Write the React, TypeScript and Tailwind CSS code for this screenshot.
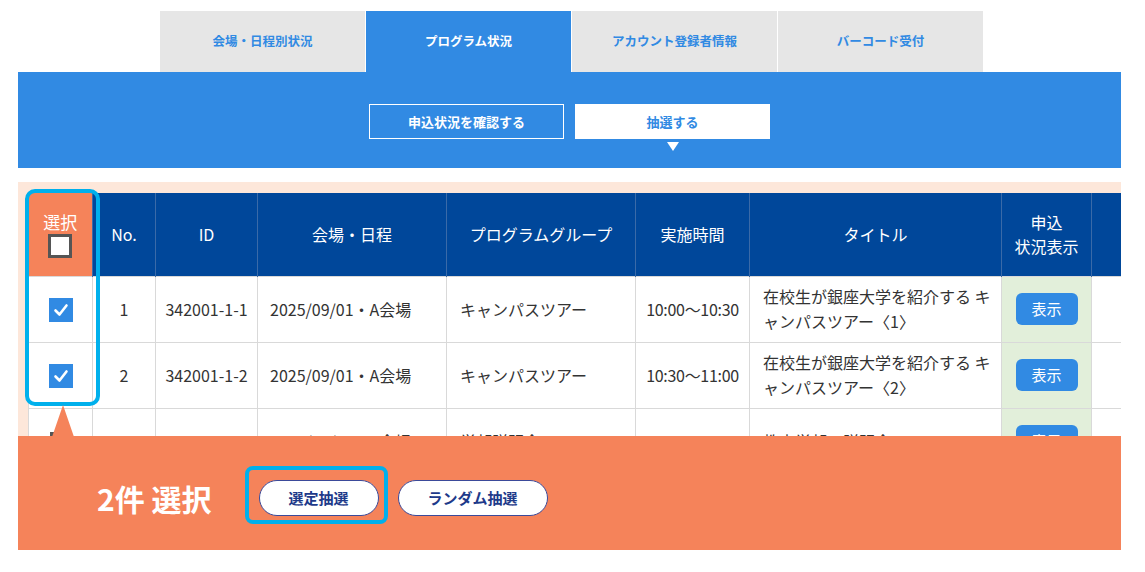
import React from 'react';

interface Row {
  no: number;
  id: string;
  date: string;
  group: string;
  time: string;
  title: React.ReactNode;
  checked: boolean;
}

const rows: Row[] = [
  {
    no: 1,
    id: '342001-1-1',
    date: '2025/09/01・A会場',
    group: 'キャンパスツアー',
    time: '10:00〜10:30',
    title: (
      <>
        在校生が銀座大学を紹介する キ<br />ャンパスツアー〈1〉
      </>
    ),
    checked: true,
  },
  {
    no: 2,
    id: '342001-1-2',
    date: '2025/09/01・A会場',
    group: 'キャンパスツアー',
    time: '10:30〜11:00',
    title: (
      <>
        在校生が銀座大学を紹介する キ<br />ャンパスツアー〈2〉
      </>
    ),
    checked: true,
  },
  {
    no: 3,
    id: '342001-1-4',
    date: '2025/09/01・A会場',
    group: '学部説明会',
    time: '11:15〜11:30',
    title: '教育学部の説明会',
    checked: false,
  },
];

const tabs = ['会場・日程別状況', 'プログラム状況', 'アカウント登録者情報', 'バーコード受付'];

const CheckBox: React.FC<{ checked: boolean }> = ({ checked }) =>
  checked ? (
    <span className="inline-flex items-center justify-center w-[24px] h-[24px] bg-[#318ae3] align-middle">
      <svg width="18" height="18" viewBox="0 0 18 18" fill="none">
        <polyline points="3.5,9.5 7.5,13.5 14.5,4.5" stroke="white" strokeWidth="2.6" strokeLinecap="round" strokeLinejoin="round" />
      </svg>
    </span>
  ) : (
    <span className="inline-block w-[22px] h-[22px] bg-white border-[3px] border-[#555] align-middle" />
  );

const App: React.FC = () => {
  return (
    <div className="relative w-[1145px] h-[572px] bg-white overflow-hidden font-['Noto_Sans_CJK_JP','Noto_Sans',sans-serif]">
      {/* tabs */}
      <div className="flex gap-[1px] pl-[160px] pt-[11px]">
        {tabs.map((t, i) => (
          <div
            key={t}
            className={`w-[205px] h-[61px] flex items-center justify-center text-[12.5px] font-bold ${
              i === 1 ? 'bg-[#318ae3] text-white' : 'bg-[#e6e6e6] text-[#318ae3]'
            }`}
          >
            {t}
          </div>
        ))}
      </div>

      {/* sub nav */}
      <div className="ml-[18px] w-[1103px] h-[96px] bg-[#318ae3] flex justify-center gap-[11px] pt-[32px]">
        <div className="w-[195px] h-[35px] border border-white flex items-center justify-center text-white text-[13px] font-bold">
          申込状況を確認する
        </div>
        <div className="relative w-[195px] h-[35px] bg-white flex items-center justify-center text-[#318ae3] text-[13px] font-bold">
          抽選する
          <span className="absolute left-1/2 -translate-x-1/2 top-[38px] w-0 h-0 border-l-[6px] border-r-[6px] border-t-[9px] border-l-transparent border-r-transparent border-t-white" />
        </div>
      </div>

      {/* table section */}
      <div className="relative ml-[18px] w-[1103px] mt-[14px] h-[368px] bg-[#fde7da] overflow-hidden pt-[11px] pl-[10px]">
        <table className="table-fixed border-collapse w-[1170px] text-[16px] text-[#333]">
          <colgroup>
            <col className="w-[64px]" />
            <col className="w-[63px]" />
            <col className="w-[102px]" />
            <col className="w-[189px]" />
            <col className="w-[189px]" />
            <col className="w-[114px]" />
            <col className="w-[252px]" />
            <col className="w-[90px]" />
            <col className="w-[107px]" />
          </colgroup>
          <thead>
            <tr className="h-[83px] text-white">
              <th className="bg-[#f5835a] border-r border-[#3a6aa8] font-normal align-middle">
                <div className="flex flex-col items-center leading-none pt-[2px]">
                  <span className="text-[17px]">選択</span>
                  <span className="mt-[4px] w-[24px] h-[24px] bg-white border-[3px] border-[#555]" />
                </div>
              </th>
              <th className="bg-[#00479a] border-x border-[#3a6aa8] font-normal">No.</th>
              <th className="bg-[#00479a] border-x border-[#3a6aa8] font-normal">ID</th>
              <th className="bg-[#00479a] border-x border-[#3a6aa8] font-normal">会場・日程</th>
              <th className="bg-[#00479a] border-x border-[#3a6aa8] font-normal">プログラムグループ</th>
              <th className="bg-[#00479a] border-x border-[#3a6aa8] font-normal">実施時間</th>
              <th className="bg-[#00479a] border-x border-[#3a6aa8] font-normal">タイトル</th>
              <th className="bg-[#00479a] border-x border-[#3a6aa8] font-normal leading-[24px]">
                申込
                <br />
                状況表示
              </th>
              <th className="bg-[#00479a] border-l border-[#3a6aa8]" />
            </tr>
          </thead>
          <tbody>
            {rows.map((r) => (
              <tr key={r.no} className="h-[66px] bg-white">
                <td className="border border-[#d9d9d9] text-center">
                  <CheckBox checked={r.checked} />
                </td>
                <td className="border border-[#d9d9d9] text-center">{r.no}</td>
                <td className="border border-[#d9d9d9] text-center whitespace-nowrap">{r.id}</td>
                <td className="border border-[#d9d9d9] pl-[12px] whitespace-nowrap">{r.date}</td>
                <td className="border border-[#d9d9d9] pl-[13px] whitespace-nowrap">{r.group}</td>
                <td className="border border-[#d9d9d9] text-center whitespace-nowrap tracking-[-0.3px]">{r.time}</td>
                <td className="border border-[#d9d9d9] pl-[13px] leading-[25px] whitespace-nowrap">{r.title}</td>
                <td className="border border-[#d9d9d9] bg-[#e2efda] text-center">
                  <button className="w-[62px] h-[32px] rounded-[6px] bg-[#318ae3] text-white text-[15px]">表示</button>
                </td>
                <td className="border border-[#d9d9d9]" />
              </tr>
            ))}
          </tbody>
        </table>

        {/* highlight around select column */}
        <div className="absolute left-[7px] top-[7px] w-[75px] h-[217px] border-[4px] border-[#00b0ec] rounded-[10px]" />

        {/* bottom action bar */}
        <div className="absolute left-0 right-0 bottom-0 h-[114px] bg-[#f5835a] flex items-center pl-[79px] pt-[10px]">
          <span className="absolute left-[34px] top-[-31px] w-0 h-0 border-l-[11px] border-r-[11px] border-b-[32px] border-l-transparent border-r-transparent border-b-[#f5835a]" />
          <div className="text-white text-[30px] font-bold tracking-[0px]">2件 選択</div>
          <div className="relative ml-[47px]">
            <button className="w-[120px] h-[36px] rounded-full bg-white border border-[#3b4a9a] text-[#1e3a8a] text-[15px] font-bold">
              選定抽選
            </button>
            <div className="absolute left-[-14px] right-[-9px] top-[-14px] bottom-[-8px] border-[4px] border-[#00b0ec] rounded-[8px]" />
          </div>
          <button className="ml-[19px] w-[150px] h-[36px] rounded-full bg-white border border-[#3b4a9a] text-[#1e3a8a] text-[15px] font-bold">
            ランダム抽選
          </button>
        </div>
      </div>
    </div>
  );
};

export default App;
